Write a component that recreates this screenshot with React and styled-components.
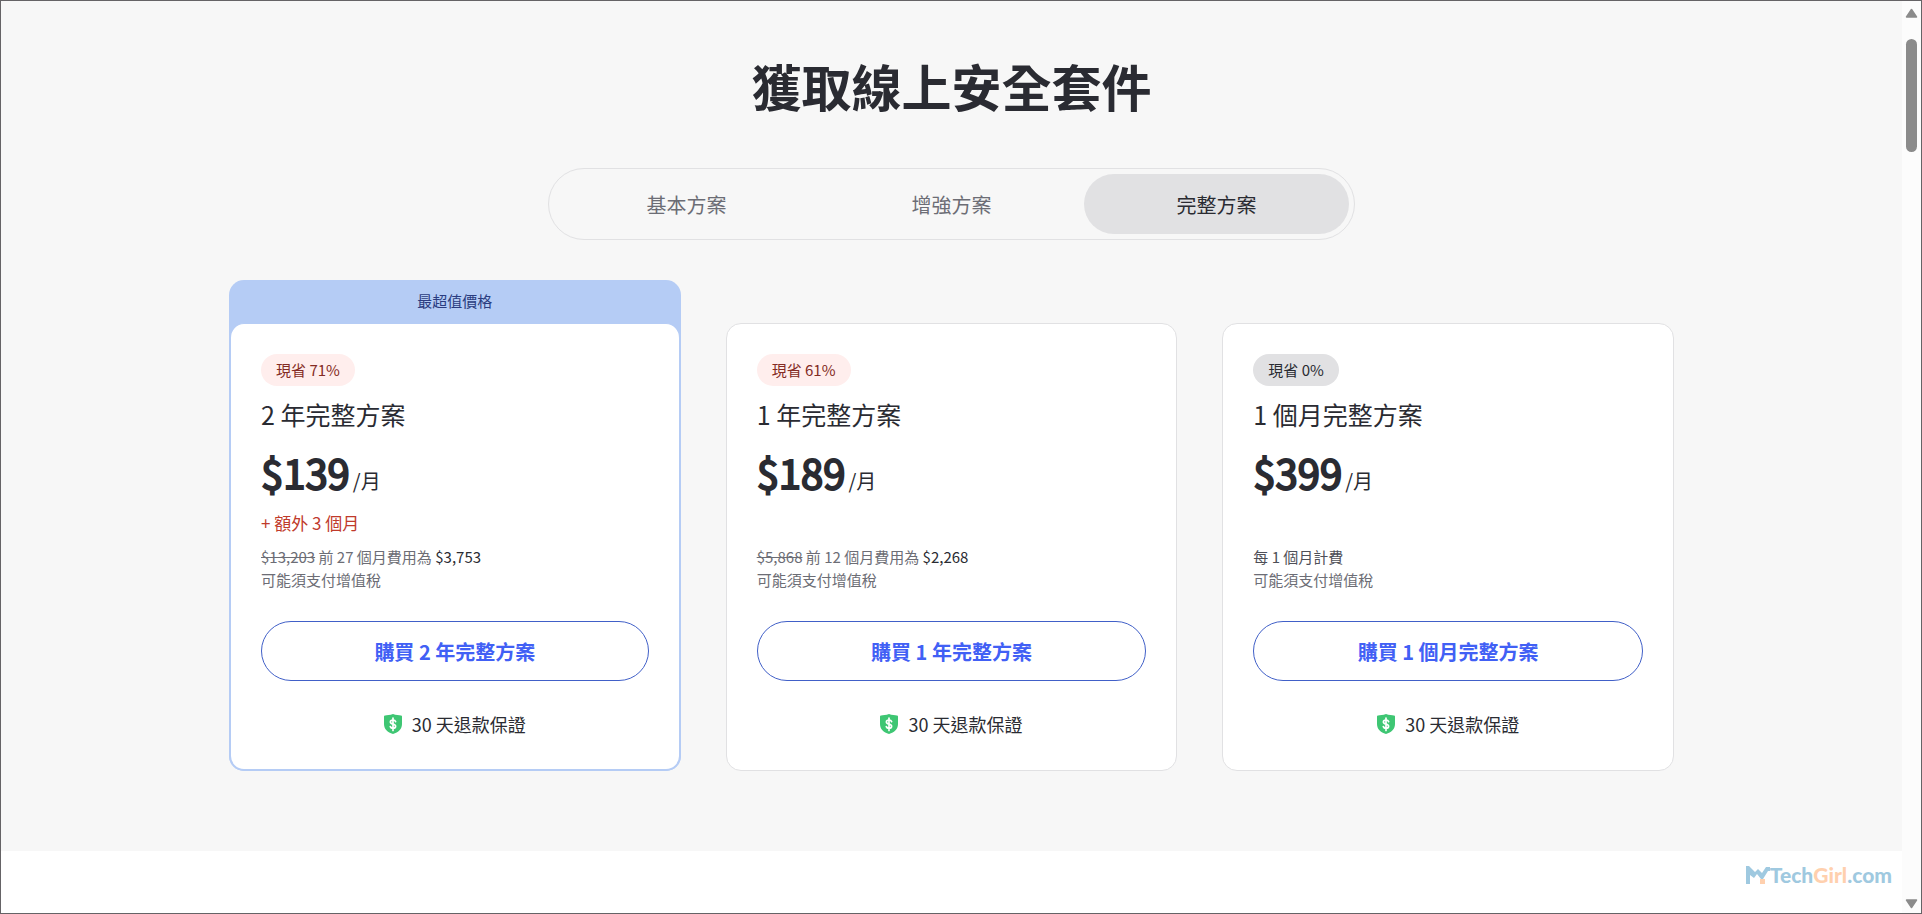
import React, { useState } from "react";
import styled, { createGlobalStyle } from "styled-components";

const GlobalStyle = createGlobalStyle`
  * {
    box-sizing: border-box;
  }

  body {
    margin: 0;
    overflow: hidden;
    color: #2a2b32;
    background: #fff;
    font-family: "Noto Sans CJK TC", sans-serif;
  }

  button {
    font-family: inherit;
    cursor: pointer;
  }
`;

const Window = styled.div`
  display: flex;
  height: 100vh;
  border: 1px solid #656366;
`;

const Page = styled.div`
  flex: 1;
  min-width: 0;
  display: flex;
  flex-direction: column;
  overflow: hidden;
`;

const Pricing = styled.main`
  display: flex;
  flex-direction: column;
  align-items: center;
  padding: 47px 24px 80px;
  background: #f7f7f7;
`;

const Heading = styled.h1`
  margin: 0;
  font-size: 50px;
  line-height: 75px;
  font-weight: 700;
`;

const Tabs = styled.div`
  display: flex;
  width: 100%;
  max-width: 807px;
  margin: 45px 0 40px;
  padding: 5px;
  border: 1px solid #e1e1e3;
  border-radius: 36px;
`;

const Tab = styled.button`
  flex: 1;
  height: 60px;
  padding: 0;
  border: 0;
  border-radius: 30px;
  font-size: 20px;
  color: ${(props) => (props.$active ? "#2a2b32" : "#6c6d75")};
  background: ${(props) => (props.$active ? "#e1e1e3" : "transparent")};
`;

const Plans = styled.div`
  display: grid;
  grid-template-columns: repeat(3, 1fr);
  gap: 45px;
  align-items: end;
  width: 100%;
  max-width: 1445px;
`;

const Plan = styled.article`
  border-radius: 15px;
  background: ${(props) => (props.$best ? "#b5ccf5" : "transparent")};
`;

const Banner = styled.div`
  padding: 10px 0 11px;
  font-size: 15px;
  line-height: 22px;
  text-align: center;
  color: #2a3c80;
`;

const Card = styled.div`
  display: flex;
  flex-direction: column;
  padding: ${(props) => (props.$best ? "30px" : "30px 30px 31px")};
  border: ${(props) => (props.$best ? "2px solid #b5ccf5" : "1px solid #e1e1e3")};
  border-top-width: 1px;
  border-radius: 15px;
  background: #fff;
`;

const Badge = styled.span`
  align-self: flex-start;
  padding: 0 15px;
  border-radius: 16px;
  font-size: 15px;
  line-height: 32px;
  color: ${(props) => (props.$muted ? "#2a2b32" : "#842b24")};
  background: ${(props) => (props.$muted ? "#e1e1e3" : "#ffeeed")};
`;

const PlanName = styled.h2`
  margin: 9px 0 0;
  font-size: 25px;
  line-height: 38px;
  font-weight: 400;
`;

const Price = styled.div`
  display: flex;
  align-items: baseline;
  gap: 3px;
  margin-top: 11px;
  font-size: 20px;
  line-height: 30px;
`;

const Amount = styled.strong`
  font-size: 40px;
  line-height: 56px;
  font-weight: 400;
  -webkit-text-stroke: 2px #2a2b32;
`;

const Extra = styled.p`
  min-height: 28px;
  margin: 9px 0 8px;
  font-size: 17px;
  line-height: 28px;
  color: #c03a2b;
`;

const Note = styled.p`
  margin: 0;
  font-size: 15px;
  line-height: 23px;
  color: ${(props) => (props.$dark ? "#4e4f57" : "#6c6d75")};
`;

const Total = styled.span`
  color: #2a2b32;
`;

const BuyButton = styled.button`
  height: 60px;
  margin: 30px 0 28px;
  border: 1px solid #4160c8;
  border-radius: 30px;
  font-size: 20px;
  font-weight: 700;
  color: #4160f5;
  background: #fff;
`;

const Guarantee = styled.div`
  display: flex;
  align-items: center;
  justify-content: center;
  gap: 10px;
  font-size: 18px;
  line-height: 30px;
`;

const Footer = styled.footer`
  flex: 1;
  display: flex;
  justify-content: flex-end;
  align-items: flex-start;
  padding: 12px 10px 0 0;
  background: #fff;
`;

const Brand = styled.a`
  display: flex;
  align-items: center;
  font-family: Lato, sans-serif;
  font-size: 21px;
  line-height: 24px;
  font-weight: 900;
  text-decoration: none;
  color: #9fc9e0;
`;

const BrandAccent = styled.span`
  color: #ffd0ae;
`;

const Scrollbar = styled.div`
  display: flex;
  flex-direction: column;
  align-items: center;
  justify-content: space-between;
  width: 19px;
  padding: 7px 0 4px;
  background: #fcfcfc;
`;

const Track = styled.div`
  flex: 1;
  width: 11px;
  padding-top: 21px;
`;

const Thumb = styled.div`
  height: 113px;
  border-radius: 6px;
  background: #8b8b8b;
`;

const tabs = ["基本方案", "增強方案", "完整方案"];

const plans = [
  {
    name: "2 年完整方案",
    save: 71,
    price: "$139",
    extra: "+ 額外 3 個月",
    before: "$13,203",
    period: "前 27 個月費用為",
    total: "$3,753",
    best: true,
  },
  {
    name: "1 年完整方案",
    save: 61,
    price: "$189",
    before: "$5,868",
    period: "前 12 個月費用為",
    total: "$2,268",
  },
  {
    name: "1 個月完整方案",
    save: 0,
    price: "$399",
    period: "每 1 個月計費",
  },
];

const ShieldIcon = () => (
  <svg width="18" height="20" viewBox="0 0 18 20" aria-hidden="true">
    <path
      d="M9 0c3 1 6 1.400 8 1.500q1 .1 1 1.100V10c0 5-3.500 8.500-9 10C3.500 18.500 0 15 0 10V2.600q0-1 1-1.100C3 1.400 6 1 9 0z"
      fill="#3ec673"
    />
    <path
      d="M9 4v12.500M11.600 7.600C11.200 6.500 10.200 6 9 6c-1.500 0-2.600.8-2.600 2 0 2.800 5.200 1.500 5.200 4.300 0 1.200-1.100 2-2.600 2-1.300 0-2.300-.6-2.700-1.700"
      fill="none"
      stroke="#fff"
      strokeWidth="1.700"
      strokeLinecap="round"
    />
  </svg>
);

const Arrow = ({ down }) => (
  <svg width="13" height="10" viewBox="0 0 13 10" aria-hidden="true">
    <path
      d={down ? "M1.500 1h10l-5 7.500z" : "M1.500 9h10l-5-7.500z"}
      fill="#8b8b8b"
      stroke="#8b8b8b"
      strokeWidth="1.500"
      strokeLinejoin="round"
    />
  </svg>
);

const BrandMark = () => (
  <svg width="24" height="18" viewBox="0 0 24 18" aria-hidden="true">
    <path
      d="M0 0h3l6 6 3-3 4 4 4-6h4v4h-2l-5 8h-2l-4-5-3 4-4-3v9H0z"
      fill="#9fc9e0"
    />
    <rect x="14" y="13" width="5" height="5" fill="#ffd0ae" />
  </svg>
);

const PlanCard = ({ plan }) => (
  <Plan $best={plan.best}>
    {plan.best && <Banner>最超值價格</Banner>}
    <Card $best={plan.best}>
      <Badge $muted={plan.save === 0}>現省 {plan.save}%</Badge>
      <PlanName>{plan.name}</PlanName>
      <Price>
        <Amount>{plan.price}</Amount>
        <span>/月</span>
      </Price>
      <Extra>{plan.extra}</Extra>
      <Note $dark={!plan.total}>
        {plan.before && <del>{plan.before}</del>} {plan.period}{" "}
        {plan.total && <Total>{plan.total}</Total>}
      </Note>
      <Note>可能須支付增值稅</Note>
      <BuyButton type="button">購買 {plan.name}</BuyButton>
      <Guarantee>
        <ShieldIcon />
        30 天退款保證
      </Guarantee>
    </Card>
  </Plan>
);

const App = () => {
  const [active, setActive] = useState(2);
  return (
    <Window>
      <GlobalStyle />
      <Page>
        <Pricing>
          <Heading>獲取線上安全套件</Heading>
          <Tabs role="tablist">
            {tabs.map((tab, index) => (
              <Tab
                key={tab}
                type="button"
                role="tab"
                aria-selected={index === active}
                $active={index === active}
                onClick={() => setActive(index)}
              >
                {tab}
              </Tab>
            ))}
          </Tabs>
          <Plans>
            {plans.map((plan) => (
              <PlanCard key={plan.name} plan={plan} />
            ))}
          </Plans>
        </Pricing>
        <Footer>
          <Brand href="#">
            <BrandMark />
            Tech<BrandAccent>Girl</BrandAccent>.com
          </Brand>
        </Footer>
      </Page>
      <Scrollbar>
        <Arrow />
        <Track>
          <Thumb />
        </Track>
        <Arrow down />
      </Scrollbar>
    </Window>
  );
};

export default App;
